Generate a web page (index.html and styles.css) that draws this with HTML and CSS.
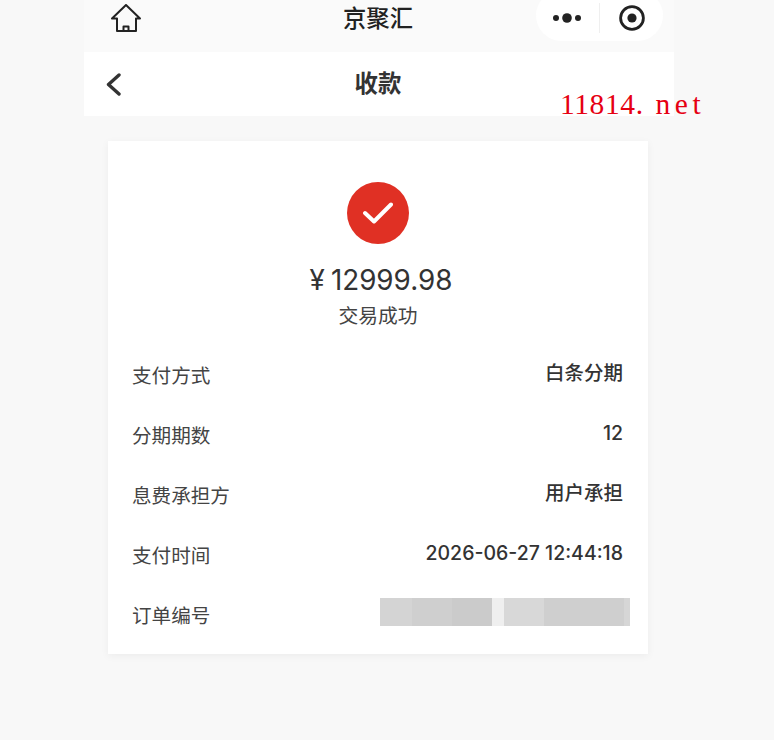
FILE: index.html
```html
<!DOCTYPE html>
<html lang="zh-CN">
<head>
  <meta charset="UTF-8" />
  <meta name="viewport" content="width=device-width, initial-scale=1.0"/>
  <title>收款</title>
  <link rel="stylesheet" href="styles.css">
</head>
<body>
<div class="phone">
  <div class="top-bar">
    <svg class="home-icon" width="30" height="28" viewBox="0 0 30 28" fill="none" stroke="#222" stroke-width="2" stroke-linejoin="round">
      <path d="M15 1 L1 14.5 H6 V27 H25 V14.5 H29 Z"/>
      <path d="M12.5 27 V22.5 H17.5 V27"/>
    </svg>
    <div class="top-title">京聚汇</div>
    <div class="capsule">
      <svg width="28" height="12" viewBox="0 0 28 12" fill="#222">
        <circle cx="3" cy="6" r="3"/>
        <circle cx="14" cy="6" r="4.8"/>
        <circle cx="25" cy="6" r="3"/>
      </svg>
      <span class="capsule-line"></span>
      <svg width="26" height="26" viewBox="0 0 26 26">
        <circle cx="13" cy="13" r="11.4" fill="none" stroke="#222" stroke-width="2.8"/>
        <circle cx="13" cy="13" r="4.6" fill="#222"/>
      </svg>
    </div>
  </div>
  <div class="nav-bar">
    <svg class="back-icon" width="15" height="23" viewBox="0 0 15 23" fill="none" stroke="#333" stroke-width="3.4" stroke-linecap="round" stroke-linejoin="round">
      <path d="M13 2 L2.5 11.5 L13 21"/>
    </svg>
    <div class="nav-title">收款</div>
  </div>
  <div class="card">
    <div class="status">
      <div class="check-circle">
        <svg width="30" height="22" viewBox="0 0 30 22" fill="none" stroke="#fff" stroke-width="4" stroke-linecap="round" stroke-linejoin="round">
          <path d="M2 11 L11 19.5 L28 2.5"/>
        </svg>
      </div>
      <div class="amount"><span class="yen">¥</span>12999.98</div>
      <div class="status-text">交易成功</div>
    </div>
    <div class="row"><span class="label">支付方式</span><span class="value">白条分期</span></div>
    <div class="row"><span class="label">分期期数</span><span class="value">12</span></div>
    <div class="row"><span class="label">息费承担方</span><span class="value">用户承担</span></div>
    <div class="row"><span class="label">支付时间</span><span class="value">2026-06-27 12:44:18</span></div>
    <div class="row"><span class="label">订单编号</span>
      <div class="masked">
        <i class="m1"></i><i class="m2"></i><i class="m3"></i><i class="m4"></i><i class="m5"></i><i class="m6"></i><i class="m7"></i>
      </div>
    </div>
  </div>
</div>
<div class="watermark"><span class="wm-num">11814</span><span class="wm-dot">. </span><span class="wm-tail">net</span></div>
</body>
</html>
```

FILE: styles.css
```css
html, body {
  margin: 0;
  padding: 0;
  height: 740px;
  overflow: hidden;
}
body {
  position: relative;
  background-color: #f8f8f8;
  font-family: "Inter", "Noto Sans CJK SC", sans-serif;
  color: #333;
}
.phone {
  width: 590px;
  margin-left: 84px;
  height: 740px;
  background-color: #f8f8f8;
}
.top-bar {
  height: 52px;
  background-color: #fafafa;
  display: flex;
  align-items: flex-start;
  justify-content: space-between;
  position: relative;
  box-sizing: border-box;
  padding: 4px 11px 0 27px;
}
.top-title {
  position: absolute;
  left: 0;
  right: 2px;
  top: 3px;
  text-align: center;
  font-size: 23.3px;
  line-height: 32px;
  font-weight: 500;
  color: #222;
}
.capsule {
  position: relative;
  margin-top: -14px;
  width: 127px;
  height: 51px;
  box-sizing: border-box;
  border-radius: 26px;
  background-color: #fff;
  display: flex;
  align-items: center;
  padding: 5px 0 0 17px;
}
.capsule-line {
  width: 1px;
  height: 30px;
  background-color: #efefef;
  margin: 0 19px 0 18px;
}
.nav-bar {
  height: 64px;
  background-color: #fff;
  display: flex;
  align-items: center;
  position: relative;
  padding-left: 22px;
}
.nav-title {
  position: absolute;
  left: 0;
  right: 2px;
  top: 16px;
  text-align: center;
  font-size: 23.4px;
  line-height: 32px;
  font-weight: 700;
  color: #333;
}
.card {
  margin: 25px 26px 0 24px;
  height: 513px;
  box-sizing: border-box;
  padding: 41px 25px 0 24px;
  background-color: #fff;
  box-shadow: 0 2px 8px rgba(0, 0, 0, 0.05);
}
.status {
  display: flex;
  flex-direction: column;
  align-items: center;
  height: 176px;
  margin-right: -1px;
}
.check-circle {
  width: 62px;
  height: 62px;
  border-radius: 50%;
  background-color: #e03024;
  display: flex;
  align-items: center;
  justify-content: center;
}
.amount {
  margin: 18px 0 0 6px;
  font-size: 27.8px;
  line-height: 36px;
  color: #333;
}
.yen {
  margin-right: 6px;
}
.status-text {
  margin-top: 3px;
  font-size: 19.8px;
  line-height: 30px;
  color: #444;
}
.row {
  height: 60px;
  display: flex;
  justify-content: space-between;
  align-items: flex-start;
}
.label {
  margin-top: 3px;
  font-size: 19.6px;
  line-height: 30px;
  color: #444;
}
.value {
  font-size: 19.5px;
  line-height: 30px;
  font-weight: 500;
  color: #333;
}
.masked {
  display: flex;
  width: 250px;
  height: 28px;
  margin: 0 -7px 0 0;
}
.masked i {
  display: block;
  height: 100%;
}
.m1 { width: 32px; background-color: #d4d4d4; }
.m2 { width: 40px; background-color: #cfcfcf; }
.m3 { width: 40px; background-color: #cbcbcb; }
.m4 { width: 12px; background-color: #efefef; }
.m5 { width: 40px; background-color: #d8d8d8; }
.m6 { width: 80px; background-color: #cfcfcf; }
.m7 { width: 6px; background-color: #d6d6d6; }
.watermark {
  position: absolute;
  left: 560px;
  top: 88px;
  font-family: "Liberation Serif", serif;
  font-size: 29.5px;
  line-height: 32px;
  white-space: nowrap;
  color: #e60012;
}
.wm-num {
  letter-spacing: 0.6px;
}
.wm-dot {
  letter-spacing: 2.6px;
}
.wm-tail {
  letter-spacing: 4.5px;
}
```
